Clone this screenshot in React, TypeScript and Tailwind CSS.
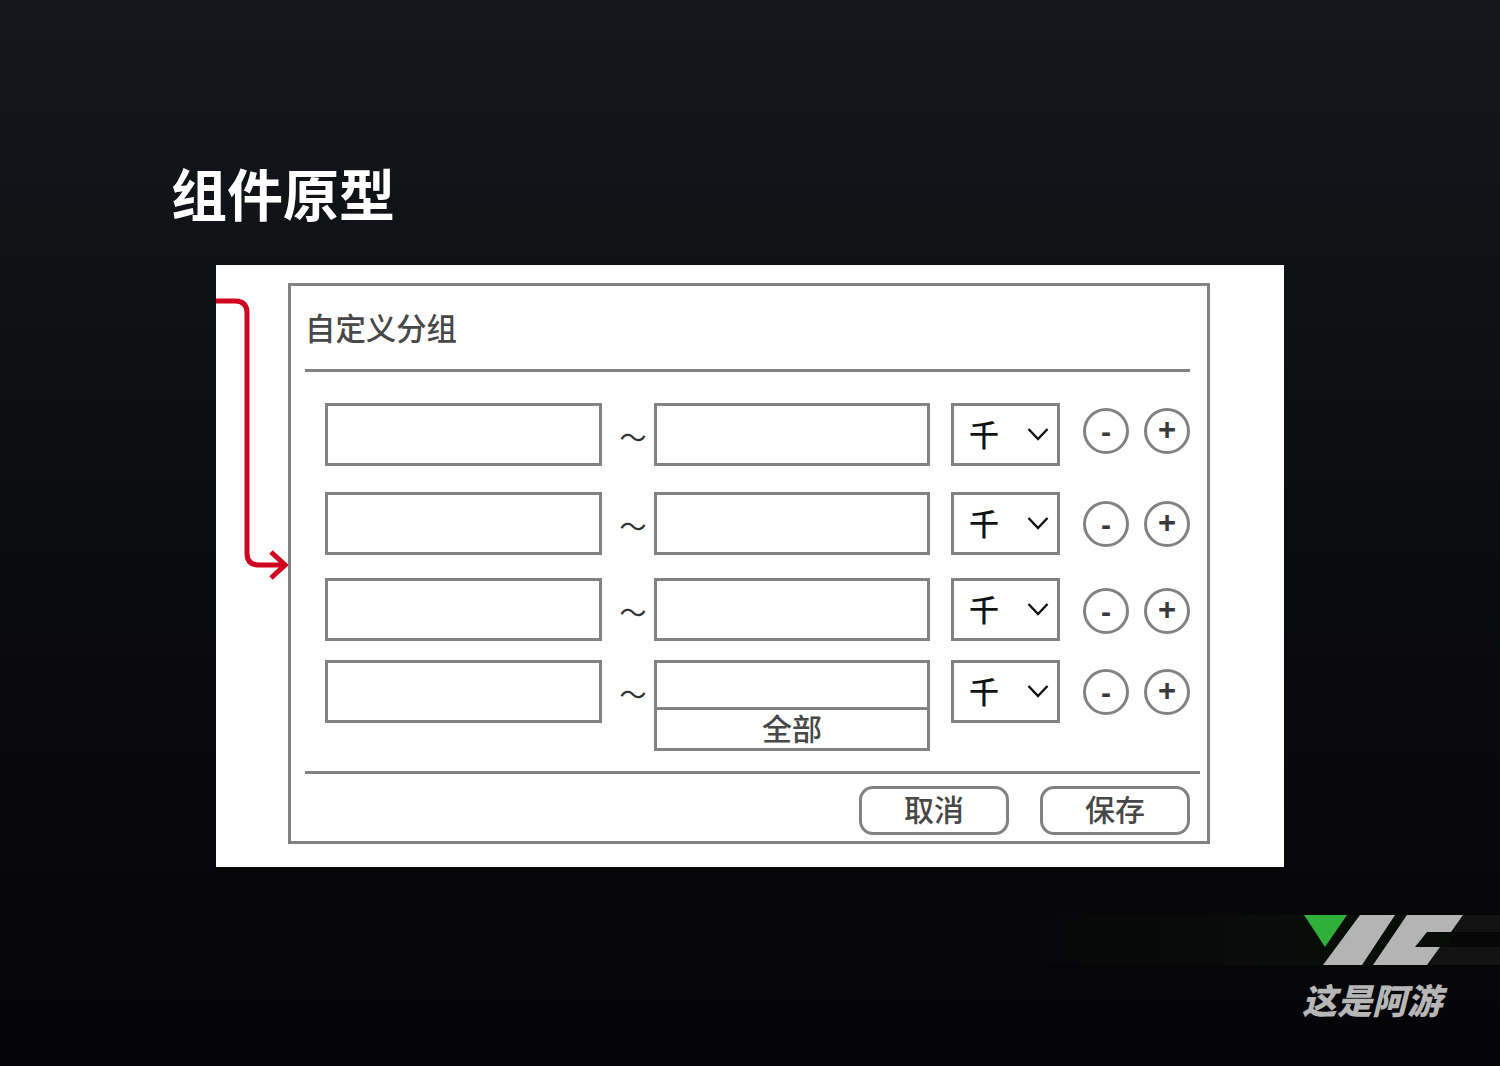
const rows = [
  { top: 'mt-[31px]', circle: 'mt-[5px]' },
  { top: 'mt-[26px]', circle: 'mt-[9px]' },
  { top: 'mt-[23px]', circle: 'mt-[10px]' },
  { top: 'mt-[19px]', circle: 'mt-[9px]' },
]

const box = 'box-border border-[3px] border-[#828282] bg-white'
const cjk = "font-['Noto_Sans_CJK_SC',sans-serif]"

function RoundButton({ label, className }: { label: string; className: string }) {
  return (
    <div className={`box-border flex h-[46px] w-[46px] items-center justify-center rounded-full border-[3px] border-[#828282] font-['Liberation_Sans',sans-serif] font-bold text-[#3a3a3a] ${className}`}>
      {label}
    </div>
  )
}

function Row({ top, circle, last }: { top: string; circle: string; last: boolean }) {
  return (
    <div className={`flex items-start pl-[34px] ${top}`}>
      <div className={`h-[63px] w-[277px] ${box}`} />
      <div className="flex h-[63px] w-[52px] items-center justify-center pl-[10px] pt-[3px] text-[27px] leading-none text-[#333]">～</div>
      {last ? (
        <div className={`flex h-[91px] w-[276px] flex-col ${box}`}>
          <div className="h-[47px] border-b-[3px] border-[#828282]" />
          <div className="flex flex-1 items-center justify-center pb-[4px] text-[30px] font-medium leading-none text-[#484848]">全部</div>
        </div>
      ) : (
        <div className={`h-[63px] w-[276px] ${box}`} />
      )}
      <div className={`ml-[21px] flex h-[63px] w-[109px] items-center justify-between pl-[15px] pr-[7px] ${box}`}>
        <span className="pb-[4px] text-[30px] font-medium leading-none text-[#111]">千</span>
        <svg width="24" height="15" viewBox="0 0 24 15" fill="none" stroke="#111" strokeWidth="2.4">
          <polyline points="2.5,2 12,12 21.5,2" />
        </svg>
      </div>
      <RoundButton label="-" className={`ml-[23px] text-[30px] ${circle}`} />
      <RoundButton label="+" className={`ml-[15px] pb-[2px] text-[31px] ${circle}`} />
    </div>
  )
}

export default function App() {
  return (
    <div className={`flex h-[1066px] w-[1500px] flex-col overflow-hidden bg-gradient-to-b from-[#14171c] via-[#0b0c0f] to-[#050507] ${cjk}`}>
      <h1 className="ml-[171px] mt-[154px] text-[56px] font-bold leading-[76px] text-white">组件原型</h1>

      <div className="relative ml-[216px] mt-[35px] h-[602px] w-[1068px] bg-white pl-[72px] pt-[18px]">
        <svg className="absolute left-0 top-0" width="72" height="320" viewBox="0 0 72 320" fill="none" stroke="#d0021f" strokeWidth="5">
          <path d="M0 36 H19 Q31 36 31 48 V288 Q31 300 43 300 H69" />
          <path d="M55 287 L69 300 L55 313" />
        </svg>

        <div className="box-border flex h-[561px] w-[922px] flex-col border-[3px] border-[#828282]">
          <div className="mx-[14px] flex h-[86px] w-[885px] items-center border-b-[3px] border-[#828282] pb-[1px] text-[30.4px] font-medium leading-none text-[#484848]">
            自定义分组
          </div>

          {rows.map((r, i) => (
            <Row key={i} top={r.top} circle={r.circle} last={i === rows.length - 1} />
          ))}

          <div className="mx-[14px] mt-[20px] h-[3px] w-[895px] bg-[#828282]" />

          <div className="mt-[12px] flex justify-end gap-[31px] pr-[17px]">
            {['取消', '保存'].map((t) => (
              <div key={t} className="box-border flex h-[49px] w-[150px] items-center justify-center rounded-[14px] border-[3px] border-[#828282] pb-[5px] text-[30px] font-medium leading-none text-[#484848]">
                {t}
              </div>
            ))}
          </div>
        </div>
      </div>

      <div className="mt-[48px] flex h-[50px] justify-end bg-gradient-to-r from-[#060608] from-[65%] to-[#090d0a] to-[87%]">
        <svg width="196" height="50" viewBox="0 0 196 50">
          <rect x="145" width="51" height="50" fill="#070708" />
          <path d="M156 0 H196 V17 H150 Z M136 32 H196 V50 H125 Z" fill="#131314" />
          <path d="M0 0 H43 L21 32 Z" fill="#2eb03a" />
          <path d="M56 0 H91 L58 50 H19 Z" fill="#b4b4b4" />
          <path d="M103 0 H159 L147 17 H123 L111 32 H136 L123 50 H69 Z" fill="#b4b4b4" />
        </svg>
      </div>

      <div className="mt-[15px] flex justify-end pr-[58px]">
        <span className="text-[35px] font-black italic leading-[38px] text-[#b6b6b6]">这是阿游</span>
      </div>
    </div>
  )
}
